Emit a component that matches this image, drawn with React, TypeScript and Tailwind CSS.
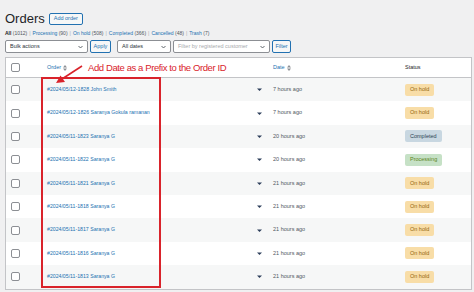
import React from 'react';

type Order = {
  id: string;
  date: string;
  status: 'On hold' | 'Completed' | 'Processing';
};

const orders: Order[] = [
  { id: '#2024/05/12-1828 John Smith', date: '7 hours ago', status: 'On hold' },
  { id: '#2024/05/12-1826 Saranya Gokula ramanan', date: '7 hours ago', status: 'On hold' },
  { id: '#2024/05/11-1823 Saranya G', date: '20 hours ago', status: 'Completed' },
  { id: '#2024/05/11-1822 Saranya G', date: '20 hours ago', status: 'Processing' },
  { id: '#2024/05/11-1821 Saranya G', date: '21 hours ago', status: 'On hold' },
  { id: '#2024/05/11-1818 Saranya G', date: '21 hours ago', status: 'On hold' },
  { id: '#2024/05/11-1817 Saranya G', date: '21 hours ago', status: 'On hold' },
  { id: '#2024/05/11-1816 Saranya G', date: '21 hours ago', status: 'On hold' },
  { id: '#2024/05/11-1813 Saranya G', date: '21 hours ago', status: 'On hold' },
];

const badgeClass = {
  'On hold': 'bg-[#f8dda7] text-[#94660c]',
  Completed: 'bg-[#c8d7e1] text-[#2e4453]',
  Processing: 'bg-[#c6e1c6] text-[#5b841b]',
};

const Checkbox = () => (
  <div className="w-[9px] h-[9px] rounded-[2px] border border-[#8c8f94] bg-white" />
);

const SortIcon = () => (
  <svg width="4" height="6" viewBox="0 0 4 6" className="ml-[2px]">
    <path d="M0 2.5 L2 0 L4 2.5 Z M0 3.5 L2 6 L4 3.5 Z" fill="#8c8f94" />
  </svg>
);

const Chevron = () => (
  <svg width="5" height="4" viewBox="0 0 5 4">
    <path d="M0.5 1 L2.5 3 L4.5 1" stroke="#50575e" strokeWidth="0.9" fill="none" />
  </svg>
);

const App = () => {
  return (
    <div className="relative w-[474px] h-[292px] overflow-hidden bg-[#f0f0f1] font-['Liberation_Sans',sans-serif] text-[#1d2327]">
      {/* Title */}
      <div className="flex items-center pl-[5px] pt-[12px] h-[25px]">
        <h1 className="text-[13px] leading-none text-[#1d2327]">Orders</h1>
        <button className="ml-[4px] h-[12px] px-[4px] rounded-[2px] border border-[#2271b1] bg-[#f6f7f7] text-[#2271b1] text-[5.5px] leading-none">
          Add order
        </button>
      </div>

      {/* Status filter links */}
      <div className="flex items-center pl-[5px] mt-[5px] h-[6px] text-[5px] leading-none text-[#2271b1] gap-[2px]">
        <span className="font-bold text-[#1d2327]">All <span className="font-normal text-[#50575e]">(1012)</span></span>
        <span className="text-[#a7aaad]">|</span>
        <span>Processing <span className="text-[#50575e]">(90)</span></span>
        <span className="text-[#a7aaad]">|</span>
        <span>On hold <span className="text-[#50575e]">(508)</span></span>
        <span className="text-[#a7aaad]">|</span>
        <span>Completed <span className="text-[#50575e]">(366)</span></span>
        <span className="text-[#a7aaad]">|</span>
        <span>Cancelled <span className="text-[#50575e]">(48)</span></span>
        <span className="text-[#a7aaad]">|</span>
        <span>Trash <span className="text-[#50575e]">(7)</span></span>
      </div>

      {/* Filters */}
      <div className="flex items-center pl-[5px] mt-[4px] h-[13px] text-[5.5px] leading-none">
        <div className="w-[83px] h-[13px] flex items-center justify-between px-[4px] rounded-[2px] border border-[#8c8f94] bg-white text-[#2c3338]">
          <span>Bulk actions</span>
          <Chevron />
        </div>
        <button className="ml-[2px] w-[21px] h-[13px] rounded-[2px] border border-[#2271b1] bg-[#f6f7f7] text-[#2271b1]">
          Apply
        </button>
        <div className="ml-[6px] w-[54px] h-[13px] flex items-center justify-between px-[4px] rounded-[2px] border border-[#8c8f94] bg-white text-[#2c3338]">
          <span>All dates</span>
          <Chevron />
        </div>
        <div className="ml-[2px] w-[97px] h-[13px] flex items-center justify-between px-[4px] rounded-[2px] border border-[#8c8f94] bg-white text-[#a7aaad]">
          <span>Filter by registered customer</span>
          <Chevron />
        </div>
        <button className="ml-[2px] w-[19px] h-[13px] rounded-[2px] border border-[#2271b1] bg-[#f6f7f7] text-[#2271b1]">
          Filter
        </button>
      </div>

      {/* Table */}
      <div className="ml-[5px] mt-[4px] w-[467px] border border-[#c3c4c7] bg-white text-[5.5px] leading-none">
        <div className="flex items-center h-[20px] border-b border-[#c3c4c7]">
          <div className="w-[41px] pl-[5px]">
            <Checkbox />
          </div>
          <div className="w-[206px] flex items-center text-[#2271b1]">
            Order <SortIcon />
          </div>
          <div className="w-[20px]" />
          <div className="w-[132px] flex items-center text-[#2271b1]">
            Date <SortIcon />
          </div>
          <div className="text-[#1d2327]">Status</div>
        </div>
        {orders.map((o, i) => (
          <div
            key={o.id}
            className={`flex items-center h-[23.4px] ${i % 2 === 0 ? 'bg-[#f6f7f7]' : 'bg-white'}`}
          >
            <div className="w-[41px] pl-[5px]">
              <Checkbox />
            </div>
            <div className="w-[206px] text-[5.2px] text-[#2271b1]">{o.id}</div>
            <div className="w-[20px] pl-[4px]">
              <svg width="5" height="3" viewBox="0 0 5 3">
                <path d="M0 0.6 L5 0.6 L2.5 3 Z" fill="#2c3e5a" />
              </svg>
            </div>
            <div className="w-[132px] text-[#50575e]">{o.date}</div>
            <div>
              <span className={`inline-flex items-center h-[12px] px-[5px] rounded-[2px] ${badgeClass[o.status]}`}>
                {o.status}
              </span>
            </div>
          </div>
        ))}
      </div>

      {/* Annotation */}
      <div className="absolute left-[41px] top-[77px] w-[120px] h-[211px] border-2 border-[#d9232b]" />
      <svg className="absolute left-0 top-0" width="474" height="292" viewBox="0 0 474 292">
        <line x1="82" y1="66" x2="62" y2="79" stroke="#d9232b" strokeWidth="1.6" />
        <path d="M56 83 L60.5 75.5 L65 82 Z" fill="#d9232b" />
      </svg>
      <div className="absolute left-[88px] top-[63px] text-[9.5px] leading-none tracking-[-0.4px] text-[#d9232b]">
        Add Date as a Prefix to the Order ID
      </div>
    </div>
  );
};

export default App;
